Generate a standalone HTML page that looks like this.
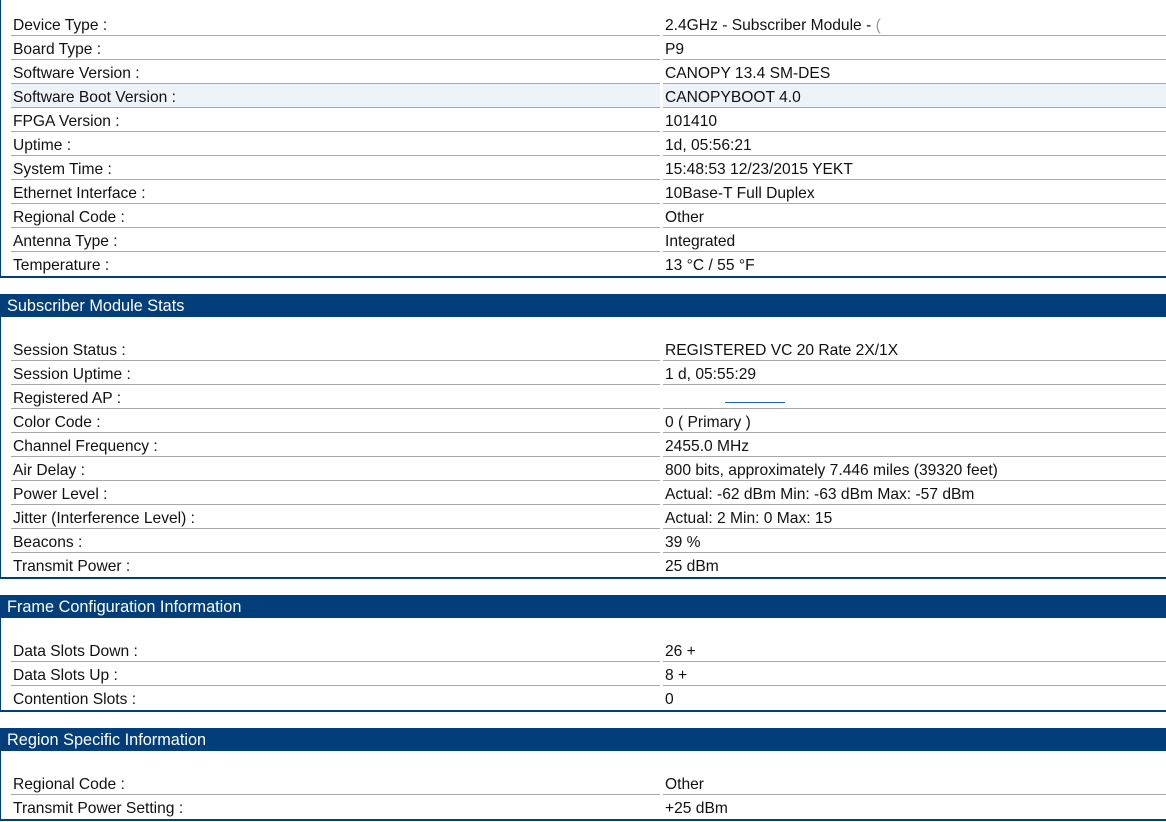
<!DOCTYPE html>
<html><head><style>
body{margin:0;width:1166px;height:822px;background:#fff;font-family:"Liberation Sans",Arial,sans-serif;font-size:15.6px;color:#111;position:relative;overflow:hidden}
.sec{position:absolute;left:0;width:1165px;border-left:1px solid #023e7a;border-bottom:2px solid #023e7a}
.hd{position:absolute;left:0;width:1166px;height:23px;background:#023e7a;color:#fff;font-size:16.3px;line-height:25px;padding-left:7px;box-sizing:border-box}
.r{position:relative;height:24px;line-height:27px}
.r .l,.r .v{position:absolute;top:0;height:23px;border-bottom:1px solid #a8a8a8;overflow:hidden}
.r .l{left:10px;width:647px;padding-left:2px}
.r .v{left:662px;right:0;padding-left:2px}
.r.last .l,.r.last .v{border-bottom:none}
.hl .l,.hl .v{background:#eef3fa}
</style></head><body>
<div class="sec" style="top:0;height:276px"><div style="height:12px"></div>
<div class="r"><div class="l">Device Type :</div><div class="v">2.4GHz - Subscriber Module - <span style="color:#999">(</span></div></div>
<div class="r"><div class="l">Board Type :</div><div class="v">P9</div></div>
<div class="r"><div class="l">Software Version :</div><div class="v">CANOPY 13.4 SM-DES</div></div>
<div class="r hl"><div class="l">Software Boot Version :</div><div class="v">CANOPYBOOT 4.0</div></div>
<div class="r"><div class="l">FPGA Version :</div><div class="v">101410</div></div>
<div class="r"><div class="l">Uptime :</div><div class="v">1d, 05:56:21</div></div>
<div class="r"><div class="l">System Time :</div><div class="v">15:48:53 12/23/2015 YEKT</div></div>
<div class="r"><div class="l">Ethernet Interface :</div><div class="v">10Base-T Full Duplex</div></div>
<div class="r"><div class="l">Regional Code :</div><div class="v">Other</div></div>
<div class="r"><div class="l">Antenna Type :</div><div class="v">Integrated</div></div>
<div class="r last"><div class="l">Temperature :</div><div class="v">13 °C / 55 °F</div></div>
</div>

<div class="hd" style="top:294px">Subscriber Module Stats</div>
<div class="sec" style="top:317px;height:260px"><div style="height:20px"></div>
<div class="r"><div class="l">Session Status :</div><div class="v">REGISTERED VC 20 Rate 2X/1X</div></div>
<div class="r"><div class="l">Session Uptime :</div><div class="v">1 d, 05:55:29</div></div>
<div class="r"><div class="l">Registered AP :</div><div class="v"><span style="display:inline-block;width:60px;margin-left:60px;border-bottom:1px solid #1a5fd0;height:14px"></span></div></div>
<div class="r"><div class="l">Color Code :</div><div class="v">0 ( Primary )</div></div>
<div class="r"><div class="l">Channel Frequency :</div><div class="v">2455.0 MHz</div></div>
<div class="r"><div class="l">Air Delay :</div><div class="v">800 bits, approximately 7.446 miles (39320 feet)</div></div>
<div class="r"><div class="l">Power Level :</div><div class="v">Actual: -62 dBm Min: -63 dBm Max: -57 dBm</div></div>
<div class="r"><div class="l">Jitter (Interference Level) :</div><div class="v">Actual: 2 Min: 0 Max: 15</div></div>
<div class="r"><div class="l">Beacons :</div><div class="v">39 %</div></div>
<div class="r last"><div class="l">Transmit Power :</div><div class="v">25 dBm</div></div>
</div>

<div class="hd" style="top:595px">Frame Configuration Information</div>
<div class="sec" style="top:618px;height:92px"><div style="height:20px"></div>
<div class="r"><div class="l">Data Slots Down :</div><div class="v">26 +</div></div>
<div class="r"><div class="l">Data Slots Up :</div><div class="v">8 +</div></div>
<div class="r last"><div class="l">Contention Slots :</div><div class="v">0</div></div>
</div>

<div class="hd" style="top:728px">Region Specific Information</div>
<div class="sec" style="top:751px;height:68px"><div style="height:20px"></div>
<div class="r"><div class="l">Regional Code :</div><div class="v">Other</div></div>
<div class="r last"><div class="l">Transmit Power Setting :</div><div class="v">+25 dBm</div></div>
</div>
</body></html>
